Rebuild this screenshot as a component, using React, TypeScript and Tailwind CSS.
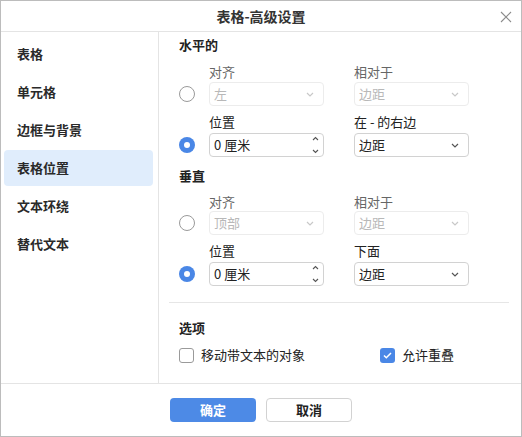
import { ReactNode } from 'react'

const font = { fontFamily: '"Noto Sans CJK SC", "Noto Sans", sans-serif' }

function Radio({ checked }: { checked?: boolean }) {
  return checked ? (
    <span className="w-4 h-4 rounded-full bg-[#4a87e6] flex items-center justify-center shrink-0">
      <span className="w-[6px] h-[6px] rounded-full bg-white" />
    </span>
  ) : (
    <span className="w-4 h-4 rounded-full border border-[#9a9a9a] bg-white shrink-0" />
  )
}

function Chevron({ light }: { light?: boolean }) {
  return (
    <svg width="8" height="5" viewBox="0 0 8 5" className="shrink-0">
      <path d="M1 1l3 3 3-3" fill="none" stroke={light ? '#c8c8c8' : '#555'} strokeWidth="1.2" />
    </svg>
  )
}

function Select({ value, disabled }: { value: string; disabled?: boolean }) {
  return (
    <div
      className={
        'h-[24px] w-[115px] rounded-[4px] border flex items-center justify-between pl-[4px] pr-[9px] text-[13px] ' +
        (disabled ? 'border-[#ececec] text-[#b8b8b8]' : 'border-[#d2d2d2] text-[#222]')
      }
    >
      <span>{value}</span>
      <Chevron light={disabled} />
    </div>
  )
}

function NumInput({ value }: { value: string }) {
  return (
    <div className="h-[24px] w-[115px] rounded-[4px] border border-[#d2d2d2] flex items-center justify-between pl-[4px] pr-[4px] text-[13px] text-[#222]">
      <span>{value}</span>
      <span className="flex flex-col items-center justify-between h-[18px]">
        <svg width="7" height="5" viewBox="0 0 7 5"><path d="M1 4l2.5-2.5L6 4" fill="none" stroke="#555" strokeWidth="1.1" /></svg>
        <svg width="7" height="5" viewBox="0 0 7 5"><path d="M1 1l2.5 2.5L6 1" fill="none" stroke="#555" strokeWidth="1.1" /></svg>
      </span>
    </div>
  )
}

function Field({ label, disabled, children }: { label: string; disabled?: boolean; children: ReactNode }) {
  return (
    <div className="flex flex-col w-[115px]">
      <div className={'h-[18px] leading-[18px] text-[13px] ' + (disabled ? 'text-[#666]' : 'text-[#222]')}>{label}</div>
      {children}
    </div>
  )
}

function Row({ checked, children }: { checked?: boolean; children: ReactNode }) {
  return (
    <div className="flex items-end">
      <div className="h-[24px] flex items-center w-[30px]">
        <Radio checked={checked} />
      </div>
      {children}
    </div>
  )
}

export default function App() {
  const tabs = ['表格', '单元格', '边框与背景', '表格位置', '文本环绕', '替代文本']

  return (
    <div style={font} className="w-[522px] h-[437px] bg-white border border-[#bcbcbc] flex flex-col text-[#222]">
      {/* Cabecera */}
      <div className="h-[31px] shrink-0 border-b border-[#e4e4e4] flex items-center justify-center relative">
        <span className="text-[14px] font-bold text-[#333]">表格-高级设置</span>
        <svg className="absolute right-[9px] top-[10px]" width="12" height="12" viewBox="0 0 12 12">
          <path d="M1 1l10 10M11 1L1 11" stroke="#8c8c8c" strokeWidth="1.1" />
        </svg>
      </div>

      <div className="flex h-[352px] shrink-0 border-b border-[#e4e4e4]">
        {/* Menú lateral */}
        <div className="w-[158px] shrink-0 border-r border-[#e4e4e4] pt-[4px] pl-[3px] pr-[5px] flex flex-col gap-[2px]">
          {tabs.map((t, i) => (
            <div
              key={t}
              className={
                'h-9 flex items-center pl-[13px] rounded-[4px] text-[13px] font-bold text-[#2a2a2a] ' +
                (i === 3 ? 'bg-[#e0edfc]' : '')
              }
            >
              {t}
            </div>
          ))}
        </div>

        {/* Contenido */}
        <div className="flex-1 flex flex-col">
          <div className="pl-[20px]">
            <div className="mt-[3px] h-5 leading-5 text-[13px] font-bold">水平的</div>

            <div className="mt-[8px]">
              <Row>
                <Field label="对齐" disabled><div className="mt-[1px]"><Select value="左" disabled /></div></Field>
                <div className="w-[30px]" />
                <Field label="相对于" disabled><div className="mt-[1px]"><Select value="边距" disabled /></div></Field>
              </Row>
            </div>
            <div className="mt-[7px]">
              <Row checked>
                <Field label="位置"><div className="mt-[2px]"><NumInput value="0 厘米" /></div></Field>
                <div className="w-[30px]" />
                <Field label="在 - 的右边"><div className="mt-[2px]"><Select value="边距" /></div></Field>
              </Row>
            </div>

            <div className="mt-[9px] h-5 leading-5 text-[13px] font-bold">垂直</div>

            <div className="mt-[7px]">
              <Row>
                <Field label="对齐" disabled><Select value="顶部" disabled /></Field>
                <div className="w-[30px]" />
                <Field label="相对于" disabled><Select value="边距" disabled /></Field>
              </Row>
            </div>
            <div className="mt-[7px]">
              <Row checked>
                <Field label="位置"><div className="mt-[2px]"><NumInput value="0 厘米" /></div></Field>
                <div className="w-[30px]" />
                <Field label="下面"><div className="mt-[2px]"><Select value="边距" /></div></Field>
              </Row>
            </div>
          </div>

          <div className="mt-[16px] ml-[10px] mr-[12px] h-px bg-[#e6e6e6]" />

          <div className="pl-[20px]">
            <div className="mt-[15px] h-5 leading-5 text-[13px] font-bold">选项</div>
            <div className="mt-[7px] flex items-center h-5 text-[13px]">
              <span className="w-[15px] h-[15px] rounded-[3px] border border-[#9a9a9a]" />
              <span className="ml-[7px] w-[179px]">移动带文本的对象</span>
              <span className="w-[15px] h-[15px] rounded-[3px] bg-[#4a87e6] flex items-center justify-center">
                <svg width="9" height="7" viewBox="0 0 9 7"><path d="M1 3.5l2.3 2.3L8 1" fill="none" stroke="#fff" strokeWidth="1.5" /></svg>
              </span>
              <span className="ml-[7px]">允许重叠</span>
            </div>
          </div>
        </div>
      </div>

      {/* Botones */}
      <div className="flex-1 flex items-start justify-center gap-[10px] pt-[14px]">
        <button className="w-[86px] h-[24px] rounded-[4px] bg-[#4d8ae6] text-white text-[13px] font-bold">确定</button>
        <button className="w-[86px] h-[24px] rounded-[4px] border border-[#d2d2d2] bg-white text-[#222] text-[13px] font-bold">取消</button>
      </div>
    </div>
  )
}
